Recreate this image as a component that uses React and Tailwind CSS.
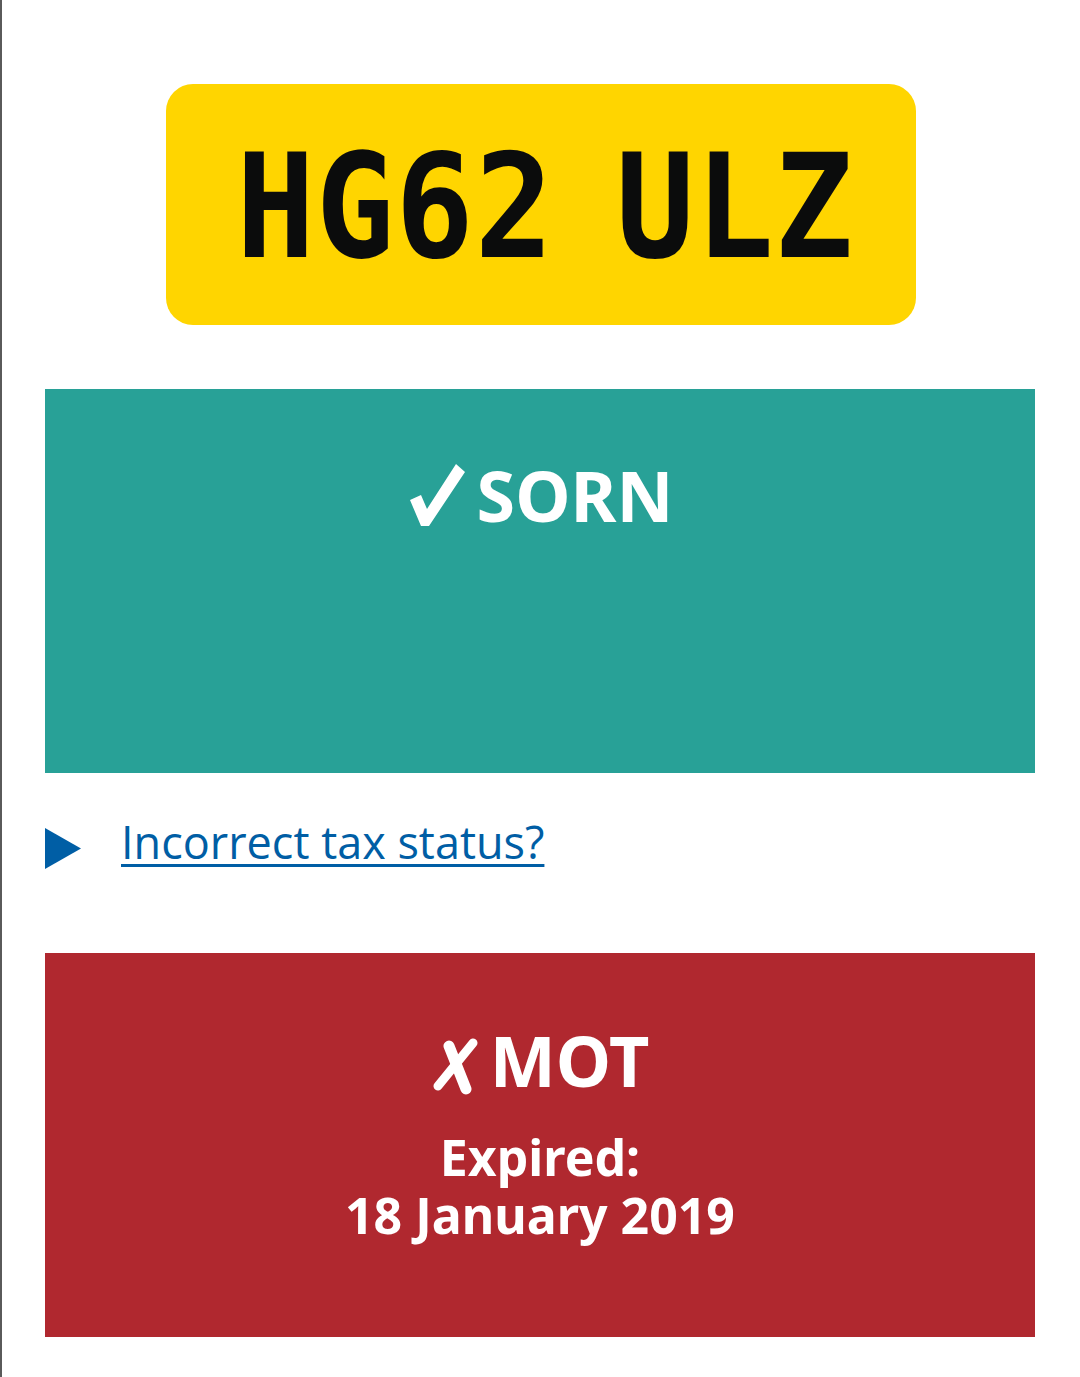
const Plate = ({ reg }) => (
  <div className="mx-auto flex h-[241px] w-[750px] items-center justify-center rounded-[27px] bg-[#ffd500]">
    <span
      className="mt-[4px] ml-[8px] scale-x-90 text-[145px] leading-none font-bold tracking-[1px] text-[#0b0c0c] [word-spacing:-20px]"
      style={{ fontFamily: '"DejaVu Sans Mono", monospace' }}
    >
      {reg}
    </span>
  </div>
);

const Tick = () => (
  <svg width="58" height="64" viewBox="0 0 58 64" className="mt-[3px] shrink-0">
    <path d="M3 37 L14 32 L20 46 L49 1 L58 9 L22 63 L14 63 Z" fill="#fff" />
  </svg>
);

const Cross = () => (
  <svg width="47" height="58" viewBox="0 0 47 58" className="mt-[13px] shrink-0">
    <g stroke="#fff" strokeLinecap="round">
      <line x1="18" y1="8" x2="35" y2="51" strokeWidth="11" />
      <line x1="42" y1="5" x2="7" y2="48" strokeWidth="9" />
    </g>
  </svg>
);

const StatusPanel = ({ good, title, children }) => (
  <div
    className={`flex h-[384px] flex-col items-center text-white ${good ? "bg-[#28a197] pt-[71px]" : "bg-[#b0282f] pt-[72px]"}`}
    style={{ fontFamily: '"Noto Sans", sans-serif' }}
  >
    <div className="flex h-[70px] items-start gap-[12px]">
      {good ? <Tick /> : <Cross />}
      <span className="text-[70px] leading-none font-bold">{title}</span>
    </div>
    {children}
  </div>
);

export default function App() {
  return (
    <div className="min-h-[1377px] border-l-2 border-[#5a5a5a] bg-white pt-[84px] pb-10">
      <Plate reg="HG62 ULZ" />

      <div className="mt-[64px] pl-[43px] pr-[45px]">
        <StatusPanel good title="SORN" />

        {/* tax status details toggle */}
        <div className="flex h-[180px] items-start gap-[40px] pt-[46px]">
          <svg width="36" height="41" viewBox="0 0 36 41" className="mt-[9px] shrink-0">
            <polygon points="0,0 36,20.5 0,41" fill="#005ea5" />
          </svg>
          <a
            href="#"
            className="text-[45px] leading-none text-[#005ea5] underline decoration-[3px] underline-offset-[5px]"
            style={{ fontFamily: '"Open Sans", sans-serif' }}
          >
            Incorrect tax status?
          </a>
        </div>

        <StatusPanel title="MOT">
          <div className="mt-[33px] text-center text-[50px] leading-[58px] font-bold">
            <div>Expired:</div>
            <div>18 January 2019</div>
          </div>
        </StatusPanel>
      </div>
    </div>
  );
}
